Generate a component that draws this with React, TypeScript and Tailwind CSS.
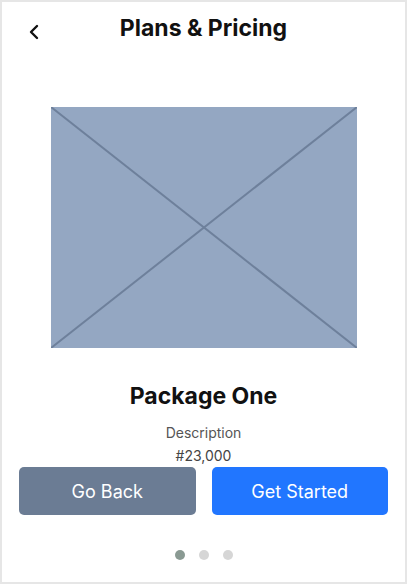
import { ChevronLeft } from "lucide-react";

const App = () => {
  return (
    <div className="w-[407px] h-[584px] bg-white border-2 border-[#e6e6e6] flex flex-col font-['Inter',sans-serif]">
      {/* Header */}
      <div className="relative h-[54px] flex items-center justify-center">
        <button className="absolute left-[20px] top-[18px] text-[#111]">
          <ChevronLeft className="w-6 h-6" strokeWidth={2.4} />
        </button>
        <h1 className="text-[23px] font-bold text-[#111] -mt-[2px]">Plans &amp; Pricing</h1>
      </div>

      {/* Placeholder image */}
      <div className="flex justify-center mt-[51px]">
        <svg width="306" height="241" viewBox="0 0 306 241" className="block">
          <rect width="306" height="241" fill="#94a7c2" />
          <line x1="0" y1="0" x2="306" y2="241" stroke="#6e809b" strokeWidth="2" />
          <line x1="306" y1="0" x2="0" y2="241" stroke="#6e809b" strokeWidth="2" />
        </svg>
      </div>

      {/* Package info */}
      <div className="flex flex-col items-center mt-[33px]">
        <h2 className="text-[23px] font-bold text-[#111] leading-[30px]">Package One</h2>
        <p className="mt-[13px] text-[14px] text-[#555] leading-[18px]">Description</p>
        <p className="mt-[5px] text-[14px] text-[#444] leading-[18px]">#23,000</p>
      </div>

      {/* Buttons */}
      <div className="flex gap-4 px-[17px] mt-[2px]">
        <button className="flex-1 h-[48px] rounded-[5px] bg-[#6b7c94] text-white text-[18px]">Go Back</button>
        <button className="flex-1 h-[48px] rounded-[5px] bg-[#2176ff] text-white text-[18px]">Get Started</button>
      </div>

      {/* Dots */}
      <div className="flex justify-center gap-[14px] mt-[35px]">
        <span className="w-[10px] h-[10px] rounded-full bg-[#8a9a93]" />
        <span className="w-[10px] h-[10px] rounded-full bg-[#d6d6d6]" />
        <span className="w-[10px] h-[10px] rounded-full bg-[#d6d6d6]" />
      </div>
    </div>
  );
};

export default App;
